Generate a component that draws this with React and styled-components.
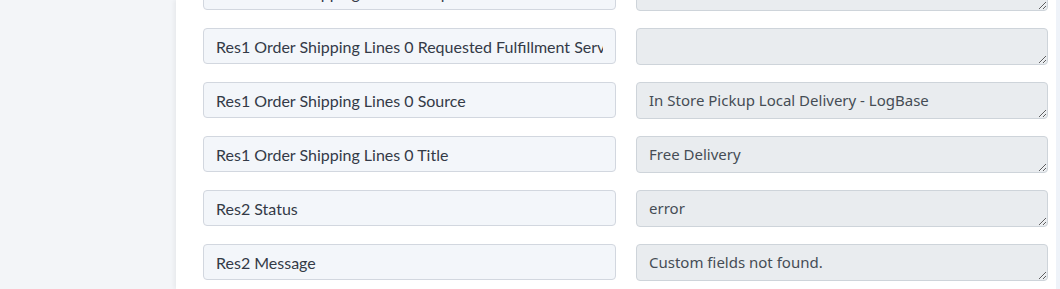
import React from 'react';
import styled, { createGlobalStyle } from 'styled-components';

const GlobalStyle = createGlobalStyle`
  html, body {
    margin: 0;
    padding: 0;
    background: #f3f5f8;
  }
  * {
    box-sizing: border-box;
  }
`;

const Page = styled.div`
  display: flex;
  height: 289px;
  overflow: hidden;
`;

const Sidebar = styled.aside`
  width: 176px;
  flex-shrink: 0;
  background: #f3f5f8;
`;

const Panel = styled.main`
  flex: 1;
  background: #fff;
  box-shadow: -2px 0 4px rgba(0, 0, 0, 0.05);
  padding: 0 8px 0 27px;
  overflow: hidden;
`;

const Edge = styled.div`
  width: 4px;
  flex-shrink: 0;
  background: #eff3f9;
`;

const FieldList = styled.div`
  display: grid;
  grid-template-columns: 413px 412px;
  column-gap: 20px;
  row-gap: 17px;
  margin-top: -26px;
`;

const KeyField = styled.input`
  height: 36px;
  width: 100%;
  padding: 0 12px;
  border: 1px solid #d2d7df;
  border-radius: 4px;
  background: #f3f6fa;
  color: #333a47;
  font-family: Lato, "Liberation Sans", sans-serif;
  font-size: 16px;
  outline: none;
`;

const ValueField = styled.textarea`
  height: 37px;
  width: 100%;
  padding: 6px 12px;
  border: 1px solid #ced4da;
  border-radius: 4px;
  background: #e9ecef;
  color: #454c55;
  font-family: "Noto Sans", "Open Sans", sans-serif;
  font-size: 15px;
  line-height: 22px;
  resize: vertical;
  overflow: hidden;
  outline: none;
`;

const fields = [
  { key: 'Res1 Order Shipping Lines 0 Requested Fulfillment Service Id', value: '' },
  { key: 'Res1 Order Shipping Lines 0 Requested Fulfillment Service', value: '' },
  { key: 'Res1 Order Shipping Lines 0 Source', value: 'In Store Pickup Local Delivery - LogBase' },
  { key: 'Res1 Order Shipping Lines 0 Title', value: 'Free Delivery' },
  { key: 'Res2 Status', value: 'error' },
  { key: 'Res2 Message', value: 'Custom fields not found.' },
];

const App = () => (
  <>
    <GlobalStyle />
    <Page>
      <Sidebar />
      <Panel>
        <FieldList>
          {fields.map((f, i) => (
            <React.Fragment key={i}>
              <KeyField readOnly value={f.key} />
              <ValueField readOnly rows={1} value={f.value} />
            </React.Fragment>
          ))}
        </FieldList>
      </Panel>
      <Edge />
    </Page>
  </>
);

export default App;
